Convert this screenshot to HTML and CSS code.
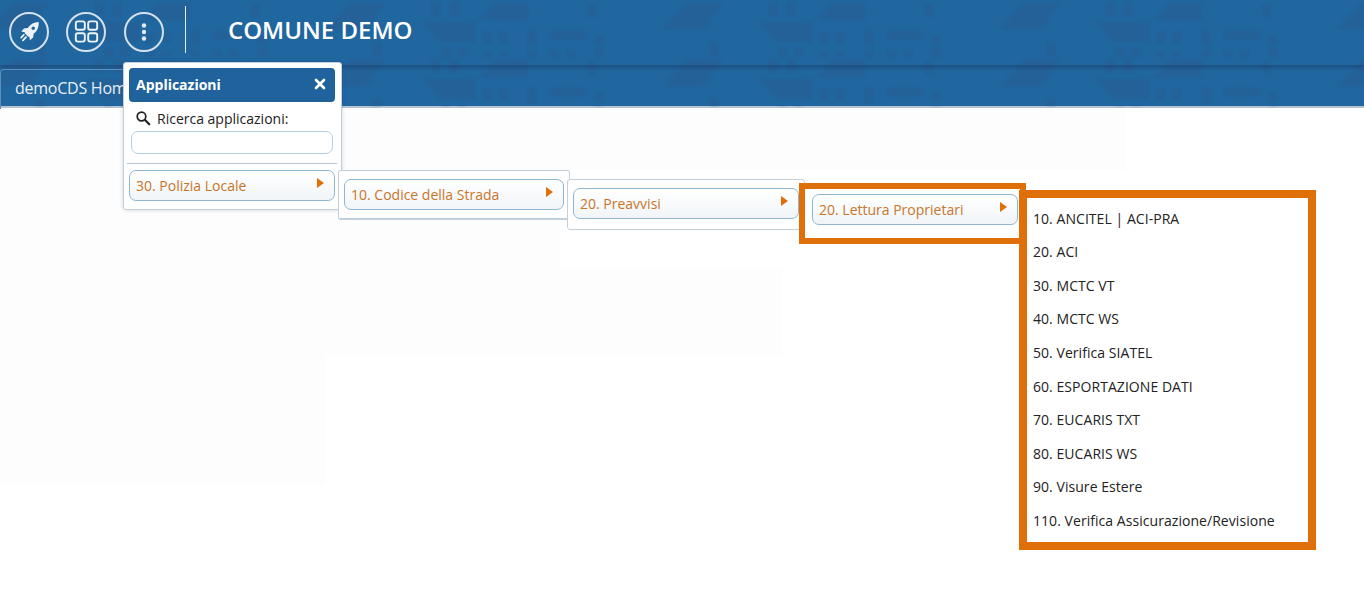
FILE: index.html
```html
<!DOCTYPE html>
<html lang="it">
<head>
<meta charset="utf-8">
<title>Comune Demo</title>
<link rel="stylesheet" href="styles.css">
</head>
<body>
<header class="masthead">
  <svg class="mast-pattern" width="1364" height="106" aria-hidden="true">
    <defs>
      <pattern id="tile" x="83" y="0" width="337" height="57" patternUnits="userSpaceOnUse">
        <g fill="#2b5b90" fill-opacity=".42">
          <polygon points="2,22 55,22 55,42 20,42"/>
          <polygon points="60,20 76,3 108,3 108,20"/>
          <polygon points="243,29 268,3 302,3 284,29"/>
          <rect x="130" y="31" width="36" height="8"/>
          <rect x="63" y="32" width="8" height="11"/>
          <rect x="79" y="32" width="8" height="11"/>
          <rect x="108" y="31" width="8" height="15"/>
          <rect x="22" y="48" width="8" height="9"/>
          <rect x="38" y="48" width="8" height="9"/>
          <rect x="63" y="52" width="8" height="5"/>
          <rect x="79" y="52" width="8" height="5"/>
          <rect x="108" y="50" width="8" height="7"/>
          <rect x="130" y="50" width="8" height="7"/>
          <rect x="147" y="50" width="8" height="7"/>
          <rect x="175" y="36" width="8" height="8"/>
          <rect x="175" y="48" width="8" height="9"/>
          <rect x="290" y="42" width="8" height="15"/>
          <rect x="12" y="2" width="8" height="14"/>
          <rect x="30" y="2" width="8" height="14"/>
          <rect x="168" y="5" width="8" height="12"/>
        </g>
      </pattern>
    </defs>
    <rect width="1364" height="106" fill="url(#tile)"/>
  </svg>
  <div class="topbar">
    <button class="round-btn" aria-label="Avvio">
      <svg viewBox="0 0 24 24" width="25" height="25"><path fill="#eef3f8" d="M20.800 2.900c-4.400.1-7.900 2-10.500 5.700l-3.600.4-2.600 3.100 3.500.6c-.1.400-.2.700-.2 1l3.400 3.400c.3 0 .7-.1 1-.2l.6 3.500 3.100-2.600.4-3.600c3.600-2.700 5.300-6.400 4.900-11.800zM15.600 10.500a1.700 1.700 0 1 1 0-3.400 1.700 1.700 0 0 1 0 3.400z"/><path fill="none" stroke="#eef3f8" stroke-width="1.700" stroke-linecap="round" d="M6.500 15.300l-2.500 2.500M8.700 17.500l-3 3"/></svg>
    </button>
    <button class="round-btn" aria-label="Moduli">
      <svg viewBox="0 0 24 24" width="27" height="27" fill="none" stroke="#eef3f8" stroke-width="1.700"><rect x="2.500" y="3" width="8" height="7.500" rx="1.800"/><rect x="13.500" y="3" width="8" height="7.500" rx="1.800"/><rect x="2.500" y="13.500" width="8" height="7.500" rx="1.800"/><rect x="13.500" y="13.500" width="8" height="7.500" rx="1.800"/></svg>
    </button>
    <button class="round-btn" aria-label="Altro">
      <svg viewBox="0 0 24 24" width="24" height="24" fill="#e3ebf3"><circle cx="12" cy="5.500" r="2.200"/><circle cx="12" cy="12" r="2.200"/><circle cx="12" cy="18.500" r="2.200"/></svg>
    </button>
    <span class="sep"></span>
    <h1 class="site-title">COMUNE DEMO</h1>
  </div>
  <nav class="tabbar"><a class="tab">demoCDS Home</a></nav>
</header>

<section class="menu menu-root">
  <div class="menu-title"><span>Applicazioni</span>
    <svg class="close" viewBox="0 0 12 12" width="12" height="12" fill="none" stroke="#fff" stroke-width="2.600" stroke-linecap="round" aria-label="Chiudi"><path d="M2 2l8 8M10 2l-8 8"/></svg>
  </div>
  <label class="search-label">
    <svg viewBox="0 0 16 16" width="16" height="16" fill="none" stroke="#222" stroke-width="1.700"><circle cx="6.500" cy="6.500" r="4.300"/><path stroke-width="2.200" stroke-linecap="round" d="M10 10l4.300 4.300"/></svg>
    Ricerca applicazioni:
  </label>
  <input class="search-input" type="text" aria-label="Ricerca applicazioni">
  <hr class="divider">
  <a class="item">30. Polizia Locale<i class="arrow"></i></a>
</section>

<section class="menu menu-l2"><a class="item">10. Codice della Strada<i class="arrow"></i></a></section>
<section class="menu menu-l3"><a class="item">20. Preavvisi<i class="arrow"></i></a></section>
<section class="menu menu-l4"><a class="item">20. Lettura Proprietari<i class="arrow"></i></a></section>

<section class="menu-leaf">
  <a>10. ANCITEL | ACI-PRA</a>
  <a>20. ACI</a>
  <a>30. MCTC VT</a>
  <a>40. MCTC WS</a>
  <a>50. Verifica SIATEL</a>
  <a>60. ESPORTAZIONE DATI</a>
  <a>70. EUCARIS TXT</a>
  <a>80. EUCARIS WS</a>
  <a>90. Visure Estere</a>
  <a>110. Verifica Assicurazione/Revisione</a>
</section>
</body>
</html>
```
FILE: styles.css
```css
* { box-sizing: border-box; }
html, body { margin: 0; height: 100%; overflow: hidden; }
body {
  background-color: #fff;
  background-image:
    linear-gradient(#fdfdfd, #fdfdfd),
    linear-gradient(#fdfdfd, #fdfdfd),
    linear-gradient(#fdfdfd, #fdfdfd),
    linear-gradient(#fdfdfd, #fdfdfd);
  background-repeat: no-repeat;
  background-position: 0 108px, 0 170px, 0 268px, 0 355px;
  background-size: 1125px 62px, 560px 98px, 782px 87px, 325px 130px;
  font-family: "Open Sans", "Noto Sans", sans-serif;
  font-size: 14px;
  color: #222;
}

.masthead {
  position: relative;
  height: 108px;
  background-color: #20669f;
  border-bottom: 2px solid #b4c4d1;
}
.mast-pattern { position: absolute; left: 0; top: 0; filter: blur(1.2px); }
.topbar {
  position: relative;
  height: 66px;
  display: flex;
  align-items: center;
  padding: 0 0 6px 9px;
  border-bottom: 1px solid #24507f;
  box-shadow: 0 2px 3px rgba(20,50,90,.35);
}
.round-btn {
  width: 40px;
  height: 40px;
  margin-top: 4px;
  margin-right: 18px;
  padding: 0;
  display: flex;
  align-items: center;
  justify-content: center;
  background: transparent;
  border: 2px solid #d6e1ec;
  border-radius: 50%;
}
.round-btn:first-child { margin-right: 17px; }
.round-btn:last-of-type { margin-right: 17px; }
.sep { width: 1px; height: 47px; margin-left: 4px; background: #e6eef5; }
.site-title { margin: 0 0 0 42px; font-size: 24px; line-height: 30px; font-weight: 600; color: #fff; }

.tabbar { position: relative; height: 40px; }
.tab {
  display: block;
  width: 140px;
  height: 40px;
  margin-top: 3px;
  padding: 7px 0 0 14px;
  font-size: 16px;
  line-height: 22px;
  letter-spacing: -.25px;
  color: #e8f0f7;
  white-space: nowrap;
  overflow: hidden;
  border-top: 1px solid #5d8fbd;
  border-left: 1px solid #5d8fbd;
  border-radius: 4px 0 0 0;
}

.menu {
  position: absolute;
  padding: 8px 5px;
  background: #fff;
  border: 1px solid #c3d0dc;
  border-radius: 3px;
}
.menu-root { left: 123px; top: 62px; width: 219px; height: 148px; padding: 5px 6px 5px 5px; box-shadow: 0 0 4px rgba(30,60,100,.2); }
.menu-l2 { left: 338px; top: 170px; width: 232px; height: 50px; border-bottom-width: 2px; }
.menu-l3 { left: 567px; top: 179px; width: 238px; height: 51px; }
.menu-l4 { left: 799px; top: 183px; width: 227px; height: 61px; padding: 5px 2px 0 7px; border: 6px solid #df6f08; border-radius: 0; }

.menu-title {
  display: flex;
  align-items: center;
  justify-content: space-between;
  height: 34px;
  padding: 0 9px 2px 7px;
  background: #20639c;
  border-radius: 4px;
  color: #fff;
  font-weight: 700;
  font-size: 14px;
}
.search-label { display: flex; align-items: center; gap: 6px; height: 20px; margin: 6px 0 0 6px; color: #222; }
.search-input {
  display: block;
  width: 202px;
  height: 23px;
  margin: 3px 0 0 2px;
  background: #fff;
  border: 1px solid #b5cfe0;
  border-radius: 7px;
}
.divider { height: 1px; margin: 9px 0 6px -2px; width: 210px; border: 0; background: #b5cad8; }

.item {
  position: relative;
  display: block;
  height: 31px;
  padding-left: 6px;
  line-height: 29px;
  font-size: 14px;
  color: #c9752a;
  background: linear-gradient(180deg, #fff 0%, #f1f5f8 100%);
  border: 1px solid #8fb7d2;
  border-radius: 7px;
}
.arrow {
  position: absolute;
  right: 10px;
  top: 7px;
  width: 0;
  height: 0;
  border-left: 7px solid #df6f08;
  border-top: 5px solid transparent;
  border-bottom: 5px solid transparent;
}

.menu-leaf {
  position: absolute;
  left: 1019px;
  top: 190px;
  width: 297px;
  height: 360px;
  padding: 3.900px 0 0 6px;
  background: #fff;
  border: 8px solid #df6f08;
  display: flex;
  flex-direction: column;
}
.menu-leaf a {
  display: block;
  height: 33.540px;
  line-height: 33.540px;
  font-size: 14px;
  letter-spacing: .05px;
  color: #222;
}
```
